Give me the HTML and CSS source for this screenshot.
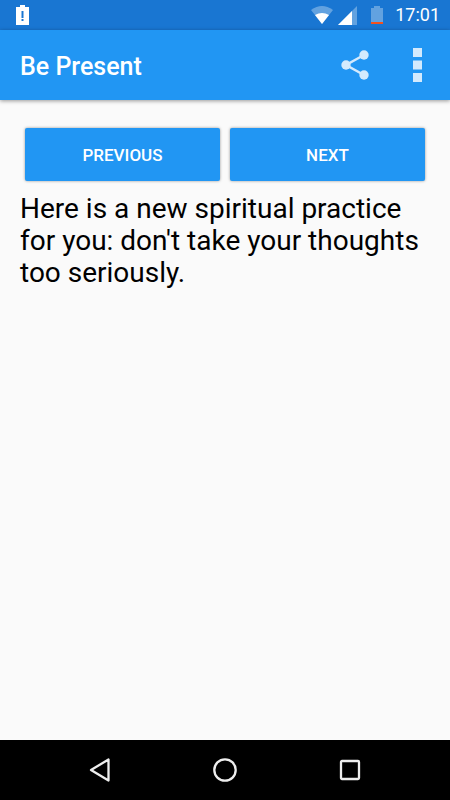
FILE: index.html
```
<!DOCTYPE html>
<html lang="en">
<head>
    <meta charset="UTF-8">
    <meta name="viewport" content="width=device-width, initial-scale=1.0">
    <title>Be Present</title>
    <link rel="stylesheet" href="styles.css">
</head>
<body>
    <div class="status-bar">
        <svg width="13" height="20" viewBox="0 0 13 20">
            <path fill="#fff" fill-rule="evenodd" d="M4 0h5v2h4v18H0V2h4zM5.500 6v7h2V6zM5.500 14v2h2v-2z"/>
        </svg>
        <div class="status-icons">
            <svg width="22" height="18" viewBox="0 0 22 18">
                <path fill="#fff" fill-opacity=".32" d="M0 4Q11-4 22 4L11 18z"/>
                <path fill="#fff" d="M4 9Q11 5 18 9L11 18z"/>
            </svg>
            <svg width="19" height="19" viewBox="0 0 19 19">
                <path fill="#fff" fill-opacity=".32" d="M19 0v19H0z"/>
                <path fill="#fff" d="M14 5v14H0z"/>
            </svg>
            <svg class="battery" width="12" height="18" viewBox="0 0 12 18">
                <path fill="#fff" fill-opacity=".32" d="M3 0h6v2h3v14H0V2h3z"/>
                <path fill="#f4511e" d="M0 16h12v2H0z"/>
            </svg>
            <span class="clock">17:01</span>
        </div>
    </div>

    <header class="app-bar">
        <h1>Be Present</h1>
        <button class="icon-button" aria-label="Share">
            <svg width="30" height="30" viewBox="0 0 30 30">
                <path fill="none" stroke="#d3eafd" stroke-width="2.500" d="M24 5L6 15l18 10"/>
                <g fill="#d3eafd">
                    <circle cx="24" cy="5" r="4.700"/>
                    <circle cx="6" cy="15" r="4.700"/>
                    <circle cx="24" cy="25" r="4.700"/>
                </g>
            </svg>
        </button>
        <button class="icon-button" aria-label="More options">
            <svg width="10" height="34" viewBox="0 0 10 34">
                <path fill="#d3eafd" d="M1 0h9v9H1zM1 12.500h9v9H1zM1 25h9v9H1z"/>
            </svg>
        </button>
    </header>

    <main class="content">
        <div class="buttons">
            <button class="button">PREVIOUS</button>
            <button class="button">NEXT</button>
        </div>
        <p class="quote">Here is a new spiritual practice for you: don't take your thoughts too seriously.</p>
    </main>

    <nav class="nav-bar">
        <button class="nav-button" aria-label="Back">
            <svg width="24" height="24" viewBox="0 0 24 24">
                <path fill="none" stroke="#eee" stroke-width="2.300" stroke-linejoin="round" d="M20.500 1.500v21L3 12z"/>
            </svg>
        </button>
        <button class="nav-button" aria-label="Home">
            <svg width="24" height="24" viewBox="0 0 24 24">
                <circle cx="12" cy="12" r="10.700" fill="none" stroke="#eee" stroke-width="2.300"/>
            </svg>
        </button>
        <button class="nav-button" aria-label="Recent apps">
            <svg width="24" height="24" viewBox="0 0 24 24">
                <rect x="3" y="3" width="18" height="18" rx="1" fill="none" stroke="#eee" stroke-width="2.300"/>
            </svg>
        </button>
    </nav>
</body>
</html>
```

FILE: styles.css
```
body {
    margin: 0;
    min-height: 100vh;
    display: flex;
    flex-direction: column;
    background-color: #fafafa;
    font-family: Roboto, sans-serif;
}

button {
    border: none;
    padding: 0;
    font-family: inherit;
    cursor: pointer;
}

svg {
    display: block;
}

.status-bar {
    height: 30px;
    display: flex;
    align-items: center;
    justify-content: space-between;
    padding: 0 10px 0 16px;
    background-color: #1976d2;
    color: white;
}

.status-icons {
    display: flex;
    align-items: center;
    gap: 5px;
}

.battery {
    margin: 0 7px 0 9px;
}

.clock {
    font-size: 18px;
    line-height: 30px;
}

.app-bar {
    height: 70px;
    display: flex;
    align-items: center;
    padding: 0 12px 0 20px;
    background-color: #2196f3;
    box-shadow: 0 1px 4px rgba(0, 0, 0, 0.4);
}

.app-bar h1 {
    flex: 1;
    margin: 0;
    padding-top: 2px;
    color: white;
    font-size: 25px;
    font-weight: 500;
}

.icon-button {
    display: flex;
    justify-content: center;
    width: 42px;
    margin-left: 20px;
    background: none;
}

.content {
    flex: 1;
    padding: 28px 20px;
}

.buttons {
    display: flex;
    gap: 10px;
    padding: 0 5px;
}

.button {
    flex: 1;
    height: 53px;
    border-radius: 2px;
    background-color: #2196f3;
    box-shadow: 0 0 3px rgba(0, 0, 0, 0.4);
    color: white;
    font-size: 17px;
    font-weight: 500;
}

.quote {
    margin: 12px 0 0;
    color: black;
    font-size: 28px;
    line-height: 32px;
}

.nav-bar {
    height: 60px;
    display: flex;
    align-items: center;
    justify-content: center;
    background-color: black;
}

.nav-button {
    display: flex;
    justify-content: center;
    width: 125px;
    background: none;
}
```
